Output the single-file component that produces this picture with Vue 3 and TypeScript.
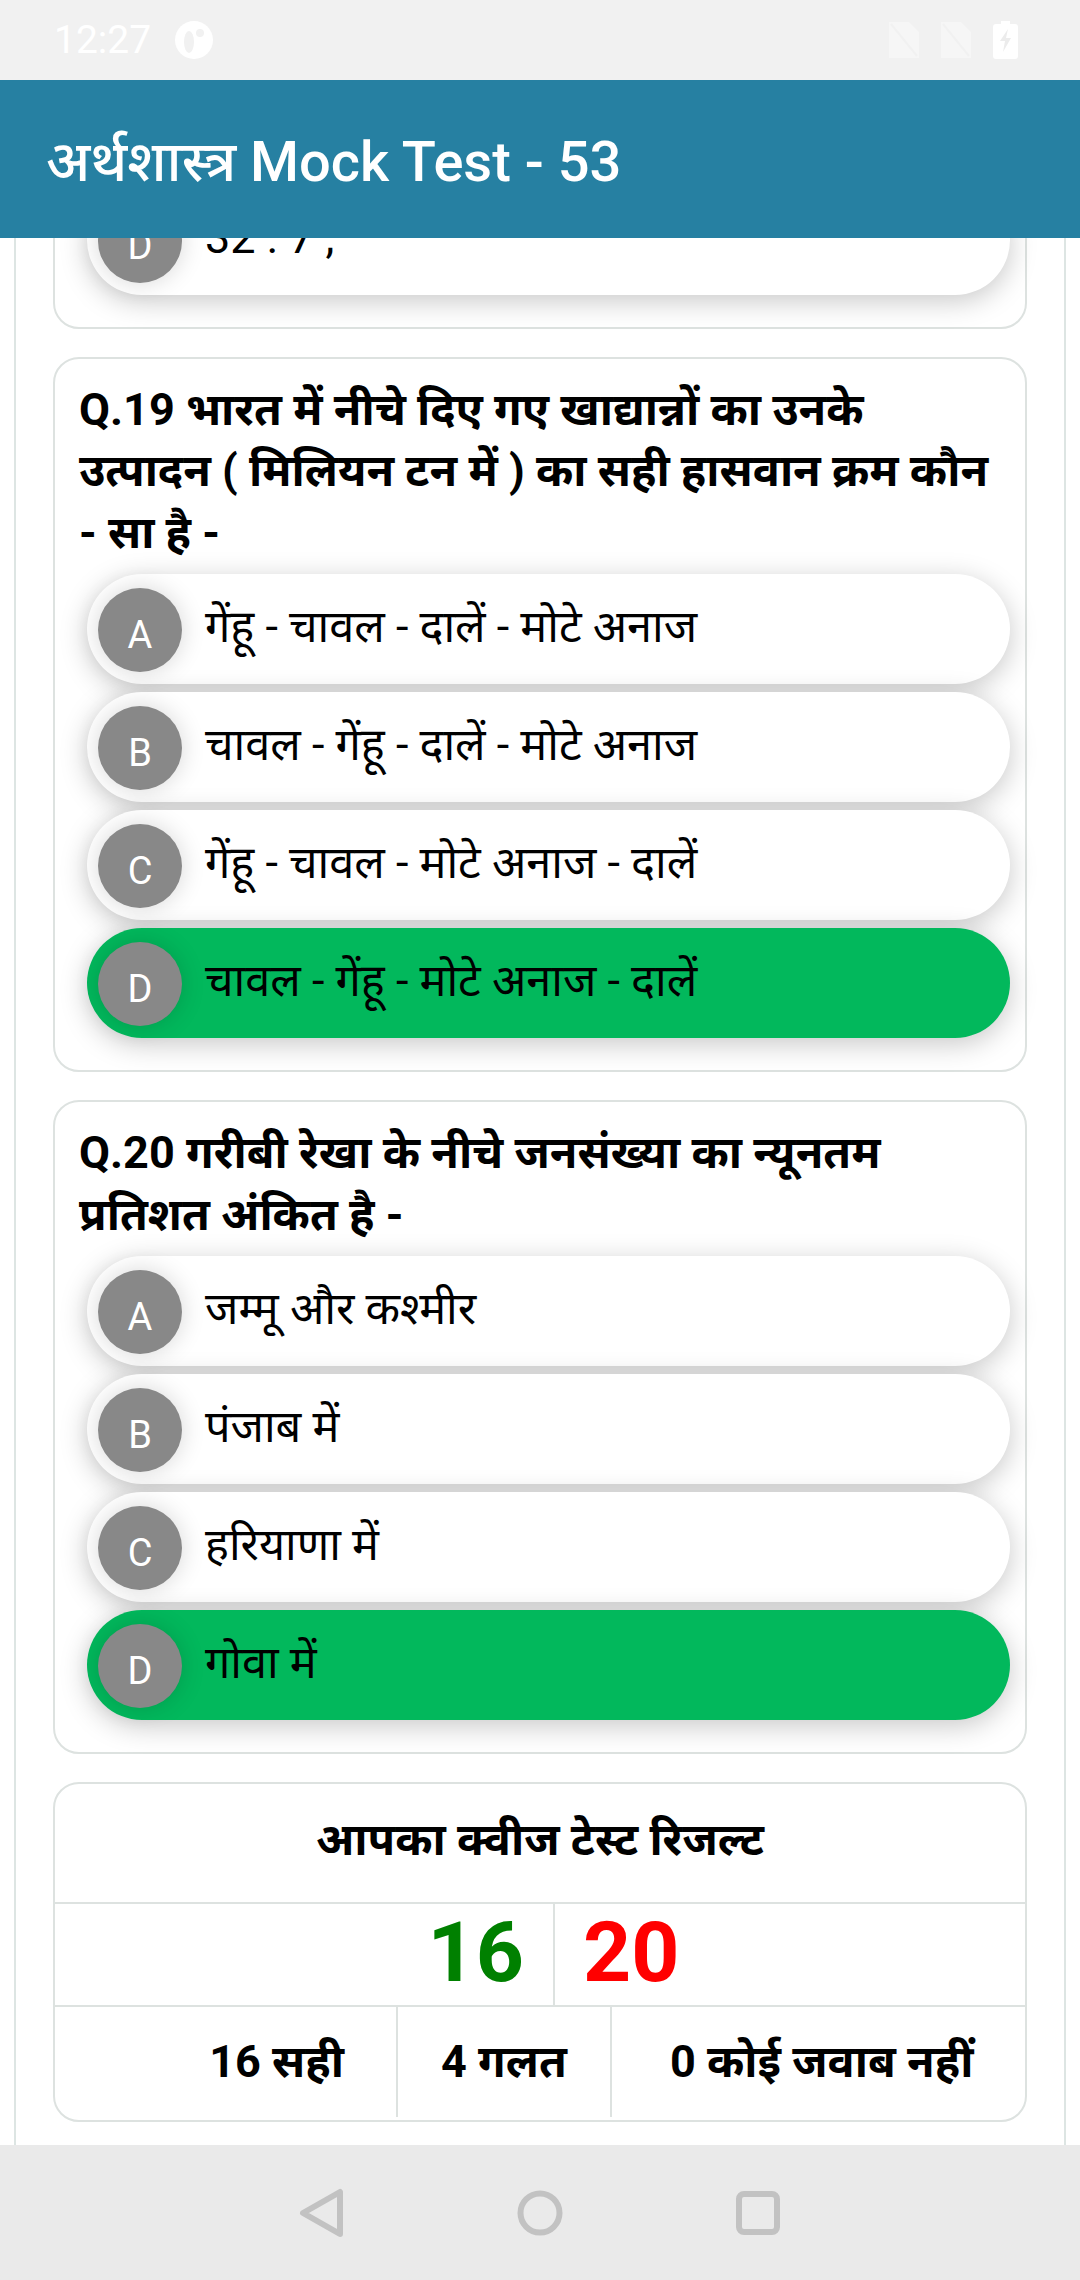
<script setup lang="ts">
interface Option { key: string; text: string; correct?: boolean }
interface Question { title: string; options: Option[] }

const questions: Question[] = [
  {
    title: 'Q.19 भारत में नीचे दिए गए खाद्यान्नों का उनके उत्पादन ( मिलियन टन में ) का सही हासवान क्रम कौन - सा है -',
    options: [
      { key: 'A', text: 'गेंहू - चावल - दालें - मोटे अनाज' },
      { key: 'B', text: 'चावल - गेंहू - दालें - मोटे अनाज' },
      { key: 'C', text: 'गेंहू - चावल - मोटे अनाज - दालें' },
      { key: 'D', text: 'चावल - गेंहू - मोटे अनाज - दालें', correct: true },
    ],
  },
  {
    title: 'Q.20 गरीबी रेखा के नीचे जनसंख्या का न्यूनतम प्रतिशत अंकित है -',
    options: [
      { key: 'A', text: 'जम्मू और कश्मीर' },
      { key: 'B', text: 'पंजाब में' },
      { key: 'C', text: 'हरियाणा में' },
      { key: 'D', text: 'गोवा में', correct: true },
    ],
  },
]
</script>

<template>
  <div class="phone">
    <div class="status">
      <div class="status-left">
        <span class="clock">12:27</span>
        <svg class="st-icon" width="40" height="40" viewBox="0 0 40 40">
          <circle cx="20" cy="20" r="19" fill="#fff" />
          <ellipse cx="15" cy="22" rx="5" ry="11" fill="#f1f1f1" />
          <circle cx="26" cy="13" r="4" fill="#f1f1f1" />
        </svg>
      </div>
      <div class="status-right">
        <svg width="30" height="36" viewBox="0 0 30 36">
          <path d="M0 0H20L30 10V36H0Z" fill="#f6f6f6" />
          <path d="M2 2L28 34" stroke="#f1f1f1" stroke-width="2" />
        </svg>
        <svg width="30" height="36" viewBox="0 0 30 36">
          <path d="M0 0H20L30 10V36H0Z" fill="#f6f6f6" />
          <path d="M2 2L28 34" stroke="#f1f1f1" stroke-width="2" />
        </svg>
        <svg width="25" height="38" viewBox="0 0 25 38">
          <path d="M8 0H17V3H22Q25 3 25 6V35Q25 38 22 38H3Q0 38 0 35V6Q0 3 3 3H8Z" fill="#fff" />
          <path d="M15 8L7 20H12L10 31L18 17H13Z" fill="#ececec" />
        </svg>
      </div>
    </div>
    <header class="appbar">अर्थशास्त्र Mock Test - 53</header>

    <main class="scroller">
      <div class="sheet">
        <section class="card clipped">
          <div class="option">
            <span class="badge">D</span>
            <span class="opt-text">32 : 7 ;</span>
          </div>
        </section>

        <section v-for="q in questions" :key="q.title" class="card">
          <h2 class="question">{{ q.title }}</h2>
          <div class="options">
            <div
              v-for="o in q.options"
              :key="o.key"
              class="option"
              :class="{ correct: o.correct }"
            >
              <span class="badge">{{ o.key }}</span>
              <span class="opt-text">{{ o.text }}</span>
            </div>
          </div>
        </section>

        <section class="result">
          <div class="result-title">आपका क्वीज टेस्ट रिजल्ट</div>
          <div class="score-row">
            <div class="score good">16</div>
            <div class="score total">20</div>
          </div>
          <div class="stat-row">
            <div class="stat s1">16 सही</div>
            <div class="stat s2">4 गलत</div>
            <div class="stat s3">0 कोई जवाब नहीं</div>
          </div>
        </section>
      </div>
    </main>

    <nav class="navbar">
      <svg width="46" height="50" viewBox="0 0 46 50" fill="none" stroke="#c2c2c2" stroke-width="6" stroke-linejoin="round">
        <path d="M41 4V46L4 25Z" />
      </svg>
      <svg width="46" height="46" viewBox="0 0 46 46" fill="none" stroke="#c2c2c2" stroke-width="6">
        <circle cx="23" cy="23" r="19.5" />
      </svg>
      <svg width="46" height="46" viewBox="0 0 46 46" fill="none" stroke="#c2c2c2" stroke-width="6">
        <rect x="4" y="4" width="38" height="38" rx="5" />
      </svg>
    </nav>
  </div>
</template>

<style scoped>
.phone {
  width: 1080px;
  height: 2280px;
  display: flex;
  flex-direction: column;
  overflow: hidden;
  background: #fff;
  font-family: Roboto, "Noto Sans", "Noto Sans Devanagari", "Lohit Devanagari", sans-serif;
  color: #000;
}
.status {
  height: 80px;
  flex: none;
  background: #f1f1f1;
  display: flex;
  justify-content: space-between;
  align-items: center;
  padding: 0 62px 0 54px;
  box-sizing: border-box;
}
.status-left { display: flex; align-items: center; gap: 23px; }
.status-right { display: flex; align-items: center; gap: 22px; }
.clock { color: #fff; font-size: 39px; line-height: 40px; }
.appbar {
  height: 158px;
  flex: none;
  background: #2680a2;
  color: #fff;
  font-size: 56px;
  font-weight: 500;
  line-height: 164px;
  padding-left: 46px;
  position: relative;
  z-index: 2;
}
.scroller {
  flex: 1;
  min-height: 0;
  display: flex;
  flex-direction: column;
  justify-content: flex-end;
  overflow: hidden;
}
.sheet {
  margin: 0 14px -30px;
  flex: none;
  border: 2px solid #dde5e3;
  border-radius: 30px;
  padding: 0 37px 51px;
  display: flex;
  flex-direction: column;
  gap: 28px;
}
.card {
  border: 2px solid #dde2e0;
  border-radius: 26px;
  padding: 20px 15px 32px 24px;
}
.clipped { padding-left: 32px; }
.question {
  margin: 0 0 11px 0;
  padding-right: 15px;
  font-size: 45px;
  line-height: 61.4px;
  font-weight: 700;
}
.options {
  display: flex;
  flex-direction: column;
  gap: 8px;
  margin-left: 8px;
}
.option {
  height: 110px;
  border-radius: 55px;
  background: #fff;
  box-shadow: 0 6px 28px rgba(0, 0, 0, 0.22);
  display: flex;
  align-items: center;
  padding-left: 11px;
  position: relative;
}
.option.correct { background: #02b85c; }
.badge {
  width: 84px;
  height: 84px;
  flex: none;
  margin-top: 2px;
  border-radius: 50%;
  background: #888;
  color: #fff;
  font-size: 38px;
  line-height: 95px;
  text-align: center;
  box-shadow: 0 0 24px rgba(0, 0, 0, 0.16);
}
.opt-text {
  margin-left: 23px;
  font-size: 45px;
  line-height: 1.3;
  margin-top: -4px;
}
.result {
  border: 2px solid #dde2e0;
  border-radius: 26px;
  height: 340px;
  box-sizing: border-box;
  display: flex;
  flex-direction: column;
}
.result-title {
  height: 118px;
  flex: none;
  text-align: center;
  font-size: 45px;
  font-weight: 700;
  line-height: 112px;
  border-bottom: 2px solid #dde2e0;
}
.score-row {
  height: 101px;
  flex: none;
  display: flex;
  border-bottom: 2px solid #dde2e0;
}
.score {
  font-size: 84px;
  font-weight: 700;
  line-height: 98px;
}
.good { width: 500px; text-align: right; padding-right: 29px; box-sizing: border-box; color: #008000; border-right: 2px solid #dde2e0; }
.total { padding-left: 28px; color: #ff0000; }
.stat-row {
  flex: 1;
  display: grid;
  grid-template-columns: 343px 214px 1fr;
  padding-bottom: 4px;
}
.stat {
  font-size: 45px;
  font-weight: 700;
  line-height: 110px;
  white-space: nowrap;
}
.s1 { text-align: right; padding-right: 52px; border-right: 2px solid #dde2e0; }
.s2 { text-align: center; border-right: 2px solid #dde2e0; }
.s3 { padding-left: 58px; }
.navbar {
  height: 135px;
  flex: none;
  background: #eaeaea;
  position: relative;
  z-index: 2;
  display: grid;
  grid-template-columns: 46px 46px 46px;
  justify-content: center;
  column-gap: 172px;
  align-items: center;
}
</style>

<style>
html, body { margin: 0; padding: 0; }
</style>
